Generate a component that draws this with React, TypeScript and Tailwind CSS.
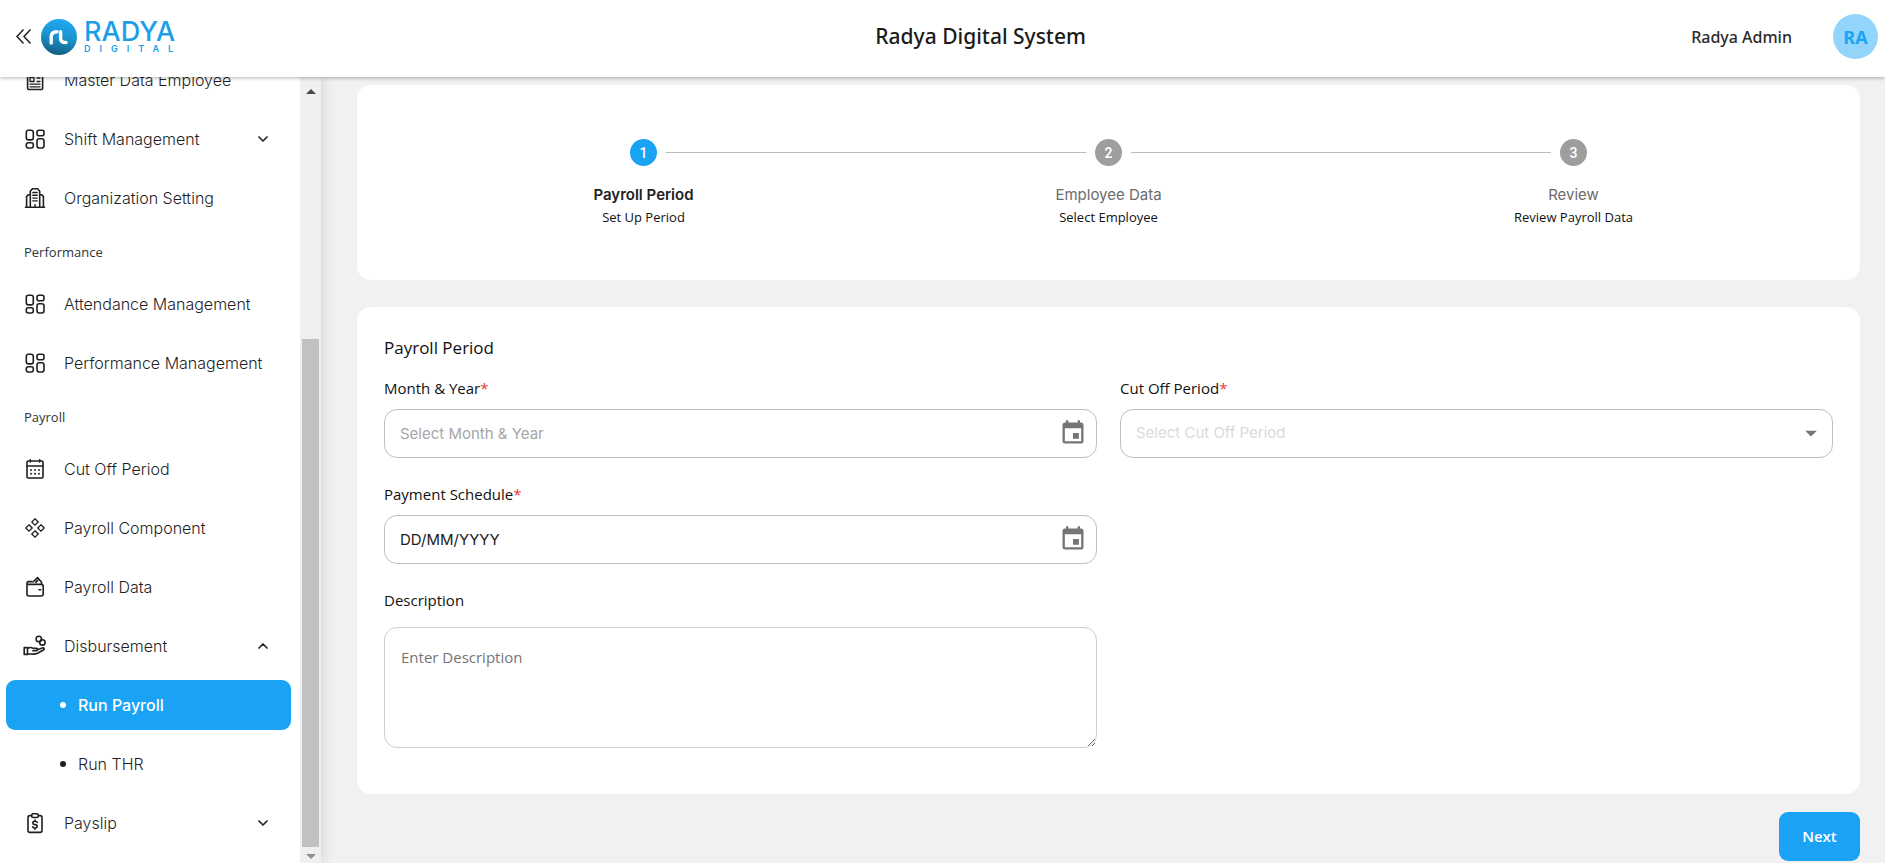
import React, { useState } from "react";
import { MdArrowDropDown, MdEvent } from "react-icons/md";
import { LuChevronDown, LuChevronUp } from "react-icons/lu";

type IconProps = { children: React.ReactNode };

const IconBase = ({ children }: IconProps) => (
  <svg
    viewBox="0 0 24 24"
    className="size-6 shrink-0"
    fill="none"
    stroke="currentColor"
    strokeWidth={1.6}
    strokeLinecap="round"
    strokeLinejoin="round"
    aria-hidden="true"
  >
    {children}
  </svg>
);

const DashboardIcon = () => (
  <IconBase>
    <rect x="3.3" y="3.3" width="7" height="9.6" rx="2.2" />
    <rect x="14" y="3.3" width="7" height="5.4" rx="2" />
    <rect x="3.3" y="15.8" width="7" height="5.2" rx="2" />
    <rect x="14" y="11.8" width="7" height="9.2" rx="2.2" />
  </IconBase>
);

const NewsIcon = () => (
  <IconBase>
    <rect x="4.6" y="2" width="15" height="19.5" rx="1" />
    <path d="M7 6h10M7 9.5h4v4H7zM14 10h3M14 13.5h3M7 16.2h10M7 18.8h10" strokeWidth={1.3} />
  </IconBase>
);

const BuildingIcon = () => (
  <IconBase>
    <path d="M2.5 21.3h19M7.3 21V5.2L9.4 2.7h5.2l2.1 2.5V21M3.6 21V10.6l1.6-1.8h2M20.4 21V10.6l-1.6-1.8h-2" />
    <path d="M9.8 6.5h4.4M9.8 9.3h4.4M9.8 12.1h4.4M9.8 14.9h4.4M12 18.5V21" strokeWidth={1.4} />
  </IconBase>
);

const CalendarIcon = () => (
  <IconBase>
    <rect x="4" y="4" width="16" height="17" rx="1.2" />
    <path d="M4 9h16M7.3 2.8V5M16.7 2.8V5" />
    <path d="M8 13h.01M12 13h.01M16 13h.01M8 16.8h.01M12 16.8h.01M16 16.8h.01" strokeWidth={1.9} />
  </IconBase>
);

const ComponentsIcon = () => (
  <IconBase>
    <g strokeWidth={1.3} strokeLinejoin="miter">
      <path d="M12 2.8 15.2 6 12 9.2 8.8 6zM12 14.8l3.2 3.2-3.2 3.2L8.8 18zM6 8.8 9.2 12 6 15.2 2.8 12zM18 8.8l3.2 3.2-3.2 3.2-3.2-3.2z" />
    </g>
  </IconBase>
);

const WalletIcon = () => (
  <IconBase>
    <path d="M9 6.6H5.6A1.6 1.6 0 0 0 4 8.2V19a2 2 0 0 0 2 2h12.2a2 2 0 0 0 2-2v-7.6a2 2 0 0 0-2-2H5.2M18.600 9.200V7.600" />
    <path d="m10 7 4.500-4.400L18.400 7M12.800 7.400l1.900-2M16 14.800h1.800" />
  </IconBase>
);

const HandCoinIcon = () => (
  <IconBase>
    <path d="M1.2 13.6h3.3v6.8H1.2zM4.5 14.6c2.400-1.700 4-1.400 5.600-.2h3.300c1.800 0 1.800 2.300 0 2.300H9.800M13.900 16l5.300-2c2-.6 2.800 1 1.200 2l-5.800 3.300c-3.500 1.500-6.400.6-10.100.6" />
    <circle cx="15.8" cy="5" r="2.7" />
    <circle cx="19.4" cy="8.4" r="2.7" />
  </IconBase>
);

const PayslipIcon = () => (
  <IconBase>
    <path d="M8.500 4.600H6.800A1.800 1.800 0 0 0 5 6.400v13.200a1.800 1.800 0 0 0 1.800 1.800h10.400a1.800 1.800 0 0 0 1.800-1.800V6.400a1.800 1.800 0 0 0-1.800-1.800h-1.700" />
    <rect x="8.7" y="2.7" width="6.6" height="3.8" rx="1.5" />
    <path d="M14.200 11.400c-.4-.8-1.200-1.100-2.200-1.100-2.800 0-2.800 3.200 0 3.300 2.900.1 2.900 3.400 0 3.400-1.100 0-1.900-.4-2.300-1.200M12 9v1.200M12 17v1.300" />
  </IconBase>
);

type NavEntry = {
  label: string;
  icon?: React.ReactNode;
  arrow?: "up" | "down";
  kind?: "heading" | "sub";
};

const NAV: NavEntry[] = [
  { label: "Master Data Employee", icon: <NewsIcon /> },
  { label: "Shift Management", icon: <DashboardIcon />, arrow: "down" },
  { label: "Organization Setting", icon: <BuildingIcon /> },
  { label: "Performance", kind: "heading" },
  { label: "Attendance Management", icon: <DashboardIcon /> },
  { label: "Performance Management", icon: <DashboardIcon /> },
  { label: "Payroll", kind: "heading" },
  { label: "Cut Off Period", icon: <CalendarIcon /> },
  { label: "Payroll Component", icon: <ComponentsIcon /> },
  { label: "Payroll Data", icon: <WalletIcon /> },
  { label: "Disbursement", icon: <HandCoinIcon />, arrow: "up" },
  { label: "Run Payroll", kind: "sub" },
  { label: "Run THR", kind: "sub" },
  { label: "Payslip", icon: <PayslipIcon />, arrow: "down" },
];

const STEPS = [
  { title: "Payroll Period", note: "Set Up Period" },
  { title: "Employee Data", note: "Select Employee" },
  { title: "Review", note: "Review Payroll Data" },
];

const Logo = () => (
  <div className="flex items-center gap-[7px] text-[#1c9fe8]">
    <svg viewBox="0 0 36 36" className="size-9" aria-hidden="true">
      <defs>
        <linearGradient id="mark" x1="0.6" y1="0" x2="0.4" y2="1">
          <stop offset="0" stopColor="#1fa9f2" />
          <stop offset="0.5" stopColor="#1b93cd" />
          <stop offset="1" stopColor="#125d80" />
        </linearGradient>
      </defs>
      <circle cx="18" cy="18" r="18" fill="url(#mark)" />
      <g fill="none" stroke="#fff" strokeWidth="3.4" strokeLinecap="round">
        <path d="M10.200 24v-6c0-3.600 2-5.200 5.800-5.200" />
        <path d="M19.600 12.800v6.400c0 3 1.600 4.300 5.400 4.300" />
      </g>
    </svg>
    <div className="flex flex-col font-[Inter]">
      <span className="text-[27px] leading-6 font-medium">RADYA</span>
      <span className="text-[9px] leading-[10px] font-semibold tracking-[1em]">DIGITAL</span>
    </div>
  </div>
);

const Header = ({ onToggle }: { onToggle: () => void }) => (
  <header className="relative z-20 flex h-[77px] shrink-0 items-center justify-between bg-white pr-[7px] pb-1 pl-[15px] shadow-[0_1px_4px_rgba(0,0,0,0.3)]">
    <div className="flex w-[255px] items-center gap-[9px]">
      <button type="button" aria-label="Toggle sidebar" onClick={onToggle}>
        <svg viewBox="0 0 17 17" className="size-[17px]" fill="none" stroke="#222" strokeWidth="1.5">
          <path d="M8.500 1.500 2 8.500l6.500 7M15.500 1.500 9 8.500l6.500 7" />
        </svg>
      </button>
      <Logo />
    </div>
    <h1 className="font-['Noto_Sans'] text-[21px] font-medium text-[#1b1b1b]">Radya Digital System</h1>
    <div className="flex items-center gap-[41px]">
      <span className="font-['Noto_Sans'] text-base font-medium text-[#2b2b2b]">Radya Admin</span>
      <span className="flex size-[45px] items-center justify-center rounded-full bg-[#93d4fa] font-['Noto_Sans'] text-lg font-bold text-[#1ba4f5]">
        RA
      </span>
    </div>
  </header>
);

const Sidebar = () => {
  const [active, setActive] = useState("Run Payroll");

  return (
    <aside className="relative z-10 flex shrink-0 shadow-[2px_0_12px_rgba(0,0,0,0.12)]">
      <nav className="flex w-[300px] flex-col justify-end gap-[9px] overflow-hidden bg-white pr-[9px] pb-[15px] pl-[6px] font-[Inter]">
        {NAV.map(({ label, icon, arrow, kind }) => {
          if (kind === "heading") {
            return (
              <p key={label} className="flex h-[38px] shrink-0 items-center pt-1 pl-[18px] font-['Open_Sans'] text-[13px] text-[#333]">
                {label}
              </p>
            );
          }

          const selected = active === label;
          return (
            <button
              key={label}
              type="button"
              onClick={() => setActive(label)}
              className={`flex h-[50px] shrink-0 items-center rounded-[9px] text-left text-base ${
                kind === "sub" ? "gap-3 pl-[54px]" : "gap-[17px] pl-[17px]"
              } ${selected ? "bg-[#1aa3f5] font-medium text-white" : "font-light text-[#1f1f1f]"}`}
            >
              {kind === "sub" ? <span className="size-[6px] rounded-full bg-current" /> : icon}
              <span className="flex-1">{label}</span>
              {arrow === "down" && <LuChevronDown className="mr-5 size-4" strokeWidth={2.5} />}
              {arrow === "up" && <LuChevronUp className="mr-5 size-4" strokeWidth={2.5} />}
            </button>
          );
        })}
      </nav>

      {/* scrollbar */}
      <div className="flex w-[21px] flex-col items-center bg-[#f0f0f0] pt-3 pb-1">
        <svg viewBox="0 0 10 5" className="h-[5px] w-[10px]" fill="#4a4a4a" aria-hidden="true">
          <path d="M0 5 5 0l5 5z" />
        </svg>
        <div className="flex-1" />
        <div className="h-[66%] w-[17px] bg-[#c1c1c1]" />
        <svg viewBox="0 0 10 5" className="mt-[7px] h-[5px] w-[10px]" fill="#8f8f8f" aria-hidden="true">
          <path d="M0 0l5 5 5-5z" />
        </svg>
      </div>
    </aside>
  );
};

const Stepper = () => (
  <ol className="flex rounded-[14px] bg-white px-[54px] pt-[54px] pb-[52px]">
    {STEPS.map(({ title, note }, i) => (
      <li key={title} className="flex flex-1 flex-col items-center">
        <div className="flex w-full items-center gap-[9px]">
          <span className={`h-px flex-1 ${i > 0 ? "bg-[#bdbdbd]" : ""}`} />
          <span
            className={`flex size-[27px] items-center justify-center rounded-full font-[Roboto] text-sm font-medium text-white ${
              i === 0 ? "bg-[#1aa3f5]" : "bg-[#9e9e9e]"
            }`}
          >
            {i + 1}
          </span>
          <span className={`h-px flex-1 ${i < STEPS.length - 1 ? "bg-[#bdbdbd]" : ""}`} />
        </div>
        <span className={`mt-[17px] font-[Inter] text-[15px] leading-6 ${i === 0 ? "font-semibold text-[#212121]" : "text-[#6b6b6b]"}`}>
          {title}
        </span>
        <span className="text-[13px] leading-[21px] text-[#111]">{note}</span>
      </li>
    ))}
  </ol>
);

type FieldProps = {
  id: string;
  label: string;
  required?: boolean;
  children: React.ReactNode;
};

const Field = ({ id, label, required, children }: FieldProps) => (
  <div className="flex flex-col">
    <label htmlFor={id} className="mb-[9px] text-[15px] leading-6 text-[#111]">
      {label}
      {required && <span className="text-[#e53935]">*</span>}
    </label>
    {children}
  </div>
);

const inputBox = "h-[49px] w-full rounded-[13px] border border-[#bfbfbf] bg-white px-[15px] font-[Inter] text-[15px] outline-none";

const PayrollForm = () => (
  <form className="rounded-[14px] bg-white px-[27px] pt-[27px] pb-[46px]">
    <h2 className="mb-[14px] text-[17px] leading-7 text-[#111]">Payroll Period</h2>
    <div className="grid grid-cols-2 gap-x-[23px] gap-y-6">
      <Field id="month" label="Month & Year" required>
        <div className="relative">
          <input id="month" type="text" placeholder="Select Month & Year" className={`${inputBox} placeholder:text-[#a6a6a6]`} />
          <MdEvent className="absolute top-[10px] right-[10px] size-7 text-[#757575]" />
        </div>
      </Field>
      <Field id="cutoff" label="Cut Off Period" required>
        <div className="relative">
          <select id="cutoff" disabled className={`${inputBox} appearance-none text-[#dadada] opacity-100`}>
            <option>Select Cut Off Period</option>
          </select>
          <MdArrowDropDown className="absolute top-[10px] right-2 size-7 text-[#757575]" />
        </div>
      </Field>
      <Field id="schedule" label="Payment Schedule" required>
        <div className="relative">
          <input id="schedule" type="text" defaultValue="DD/MM/YYYY" className={`${inputBox} text-[#1b1b1b]`} />
          <MdEvent className="absolute top-[10px] right-[10px] size-7 text-[#757575]" />
        </div>
      </Field>
      <div />
      <Field id="description" label="Description">
        <textarea
          id="description"
          placeholder="Enter Description"
          className="mt-[6px] h-[121px] rounded-[13px] border border-[#cfcfcf] px-4 py-[17px] text-[15px] leading-6 outline-none placeholder:text-[#757575]"
        />
      </Field>
    </div>
  </form>
);

export default function App() {
  const [open, setOpen] = useState(true);

  return (
    <div className="flex h-screen flex-col overflow-hidden bg-[#f1f1f1] font-['Open_Sans',sans-serif]">
      <Header onToggle={() => setOpen(!open)} />
      <div className="flex min-h-0 flex-1">
        {open && <Sidebar />}
        <main className="flex flex-1 flex-col overflow-hidden pt-2 pr-[25px] pl-9">
          <Stepper />
          <div className="h-[27px] shrink-0" />
          <PayrollForm />
          <button
            type="button"
            className="mt-[18px] h-[49px] w-[81px] shrink-0 self-end rounded-[9px] bg-[#1aa3f5] text-[15px] font-semibold text-white"
          >
            Next
          </button>
        </main>
      </div>
    </div>
  );
}
